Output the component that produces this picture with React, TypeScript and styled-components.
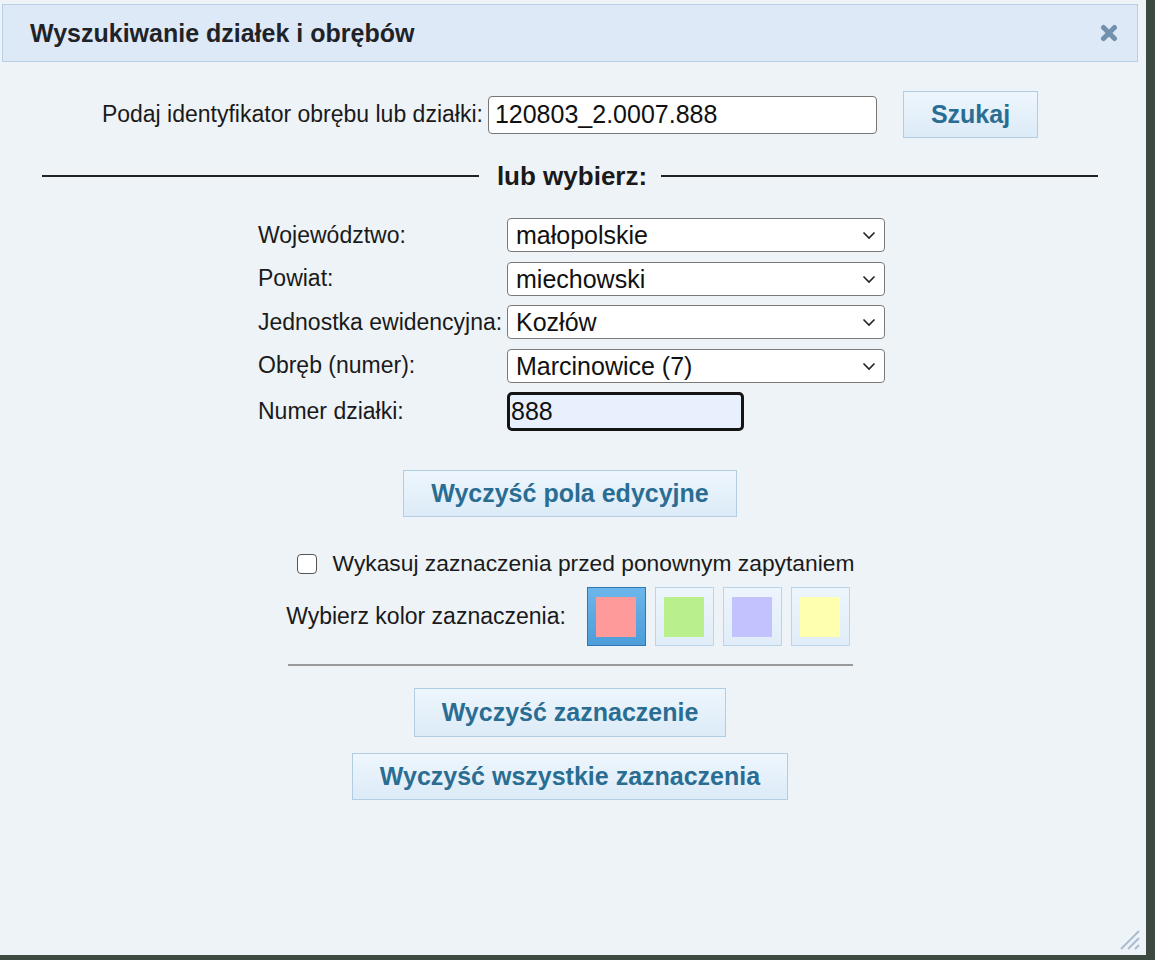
import React from "react";
import styled, { createGlobalStyle } from "styled-components";

const Global = createGlobalStyle`
  html, body { margin: 0; padding: 0; background: #3c4a42; }
  body { font-family: "Liberation Sans", Arial, sans-serif; }
  * { box-sizing: border-box; }
`;

const Panel = styled.div`
  width: 1146px;
  height: 955px;
  background: #eef3f7;
  display: flex;
  flex-direction: column;
  position: relative;
`;

const Header = styled.div`
  margin: 4px 8px 0 2px;
  height: 58px;
  border: 1px solid #b7cfe4;
  background: #dde9f6;
  display: flex;
  align-items: center;
  justify-content: space-between;
  padding: 0 19px 0 27px;
`;

const Title = styled.h1`
  margin: 0;
  font-size: 25px;
  font-weight: bold;
  color: #1f2328;
`;

const CloseBtn = styled.button`
  border: 0;
  background: none;
  padding: 0;
  width: 18px;
  height: 18px;
  display: flex;
  cursor: pointer;
`;

const Body = styled.div`
  display: flex;
  flex-direction: column;
  align-items: center;
  padding: 29px 6px 0 0;
`;

const SearchRow = styled.div`
  display: flex;
  align-items: center;
  margin-left: 0px;
`;

const Label = styled.label`
  font-size: 23px;
  color: #1a1a1a;
  white-space: nowrap;
`;

const TextInput = styled.input`
  width: 389px;
  height: 38px;
  margin-left: 5px;
  border: 1px solid #767676;
  border-radius: 4px;
  background: #fff;
  font-family: "Liberation Sans", Arial, sans-serif;
  font-size: 25px;
  color: #111;
  padding: 0 6px;
  outline: none;
`;

const Button = styled.button<{ $ml?: number; $mt?: number; $h?: number }>`
  height: ${(p) => p.$h ?? 47}px;
  margin-left: ${(p) => p.$ml ?? 0}px;
  margin-top: ${(p) => p.$mt ?? 0}px;
  padding: 0 27px;
  border: 1px solid #b0cde2;
  background: linear-gradient(#eef6fd, #dcebf7);
  color: #2a6d93;
  font-family: "Liberation Sans", Arial, sans-serif;
  font-weight: bold;
  font-size: 25px;
  cursor: pointer;
  white-space: nowrap;
`;

const Separator = styled.div`
  align-self: stretch;
  margin: 23px 42px 0 42px;
  display: flex;
  align-items: center;
  gap: 14px;
  &::before, &::after {
    content: "";
    flex: 1;
    height: 2px;
    background: #222;
  }
`;

const SepText = styled.span`
  font-size: 26px;
  font-weight: bold;
  color: #1a1a1a;
  line-height: 30px;
  margin-left: 4px;
`;

const FormGrid = styled.div`
  display: grid;
  grid-template-columns: 249px 378px;
  row-gap: 9.5px;
  align-items: center;
  margin-top: 27px;
  margin-left: 3px;
`;

const SelectWrap = styled.div`
  position: relative;
  height: 34px;
`;

const Select = styled.select`
  appearance: none;
  width: 100%;
  height: 34px;
  border: 1px solid #7a7a7a;
  border-radius: 4px;
  background: #fff;
  font-family: "Liberation Sans", Arial, sans-serif;
  font-size: 25px;
  color: #111;
  padding: 0 8px;
  outline: none;
`;

const Chevron = styled.svg`
  position: absolute;
  right: 9px;
  top: 13px;
  pointer-events: none;
`;

const NumberInput = styled.input`
  width: 237px;
  height: 39px;
  border: 3px solid #141414;
  border-radius: 5px;
  background: #e8f0fe;
  font-family: "Liberation Sans", Arial, sans-serif;
  font-size: 25px;
  color: #111;
  padding: 0 1px;
  outline: none;
`;

const CheckRow = styled.label`
  display: flex;
  align-items: center;
  gap: 16px;
  margin-top: 33px;
  margin-left: 11px;
  font-size: 22.8px;
  color: #1a1a1a;
`;

const CheckBox = styled.span`
  width: 20px;
  height: 20px;
  border: 1.5px solid #555;
  border-radius: 4px;
  background: #fff;
`;

const ColorRow = styled.div`
  display: flex;
  align-items: center;
  margin-top: 10px;
  margin-left: -4px;
`;

const ColorLabel = styled.span`
  font-size: 23px;
  color: #1a1a1a;
  margin-right: 21px;
`;

const Swatches = styled.div`
  display: flex;
  gap: 9px;
`;

const Swatch = styled.button<{ $color: string; $active?: boolean }>`
  width: 59px;
  height: 59px;
  padding: 0;
  display: flex;
  align-items: center;
  justify-content: center;
  border: 1px solid ${(p) => (p.$active ? "#2f78b5" : "#bcd4e8")};
  background: ${(p) =>
    p.$active ? "linear-gradient(#6cb6ea, #4c9dd9)" : "linear-gradient(#edf5fc, #e0edf8)"};
  cursor: pointer;
  &::after {
    content: "";
    width: 40px;
    height: 40px;
    background: ${(p) => p.$color};
  }
`;

const Rule = styled.hr`
  width: 565px;
  margin: 18px 0 0 0;
  border: 0;
  height: 2px;
  background: #9a9a9a;
`;

const Resize = styled.svg`
  position: absolute;
  right: 6px;
  bottom: 5px;
`;

const selects = [
  { label: "Województwo:", value: "małopolskie" },
  { label: "Powiat:", value: "miechowski" },
  { label: "Jednostka ewidencyjna:", value: "Kozłów" },
  { label: "Obręb (numer):", value: "Marcinowice (7)" },
];

const colors = ["#ff9a9a", "#b9f08b", "#c2c2ff", "#ffffb0"];

export default function App() {
  return (
    <>
      <Global />
      <Panel>
        <Header>
          <Title>Wyszukiwanie działek i obrębów</Title>
          <CloseBtn aria-label="zamknij">
            <svg width="18" height="18" viewBox="0 0 18 18">
              <path
                d="M3.5 3.5 L14.5 14.5 M14.5 3.5 L3.5 14.5"
                stroke="#7391ad"
                strokeWidth="5"
                strokeLinecap="round"
              />
            </svg>
          </CloseBtn>
        </Header>
        <Body>
          <SearchRow>
            <Label>Podaj identyfikator obrębu lub działki:</Label>
            <TextInput defaultValue="120803_2.0007.888" />
            <Button $ml={26}>Szukaj</Button>
          </SearchRow>
          <Separator>
            <SepText>lub wybierz:</SepText>
          </Separator>
          <FormGrid>
            {selects.map((s) => (
              <React.Fragment key={s.label}>
                <Label>{s.label}</Label>
                <SelectWrap>
                  <Select defaultValue={s.value}>
                    <option>{s.value}</option>
                  </Select>
                  <Chevron width="14" height="9" viewBox="0 0 14 9">
                    <path d="M1.5 1.5 L7 7 L12.5 1.5" fill="none" stroke="#222" strokeWidth="1.6" />
                  </Chevron>
                </SelectWrap>
              </React.Fragment>
            ))}
            <Label>Numer działki:</Label>
            <NumberInput defaultValue="888" />
          </FormGrid>
          <Button $mt={39}>Wyczyść pola edycyjne</Button>
          <CheckRow>
            <CheckBox />
            Wykasuj zaznaczenia przed ponownym zapytaniem
          </CheckRow>
          <ColorRow>
            <ColorLabel>Wybierz kolor zaznaczenia:</ColorLabel>
            <Swatches>
              {colors.map((c, i) => (
                <Swatch key={c} $color={c} $active={i === 0} />
              ))}
            </Swatches>
          </ColorRow>
          <Rule />
          <Button $mt={22} $h={49}>Wyczyść zaznaczenie</Button>
          <Button $mt={16}>Wyczyść wszystkie zaznaczenia</Button>
        </Body>
        <Resize width="22" height="22" viewBox="0 0 22 22">
          <path d="M3 21 L21 3 M10 21 L21 10 M17 21 L21 17" stroke="#a9bdd0" strokeWidth="2" />
        </Resize>
      </Panel>
    </>
  );
}
